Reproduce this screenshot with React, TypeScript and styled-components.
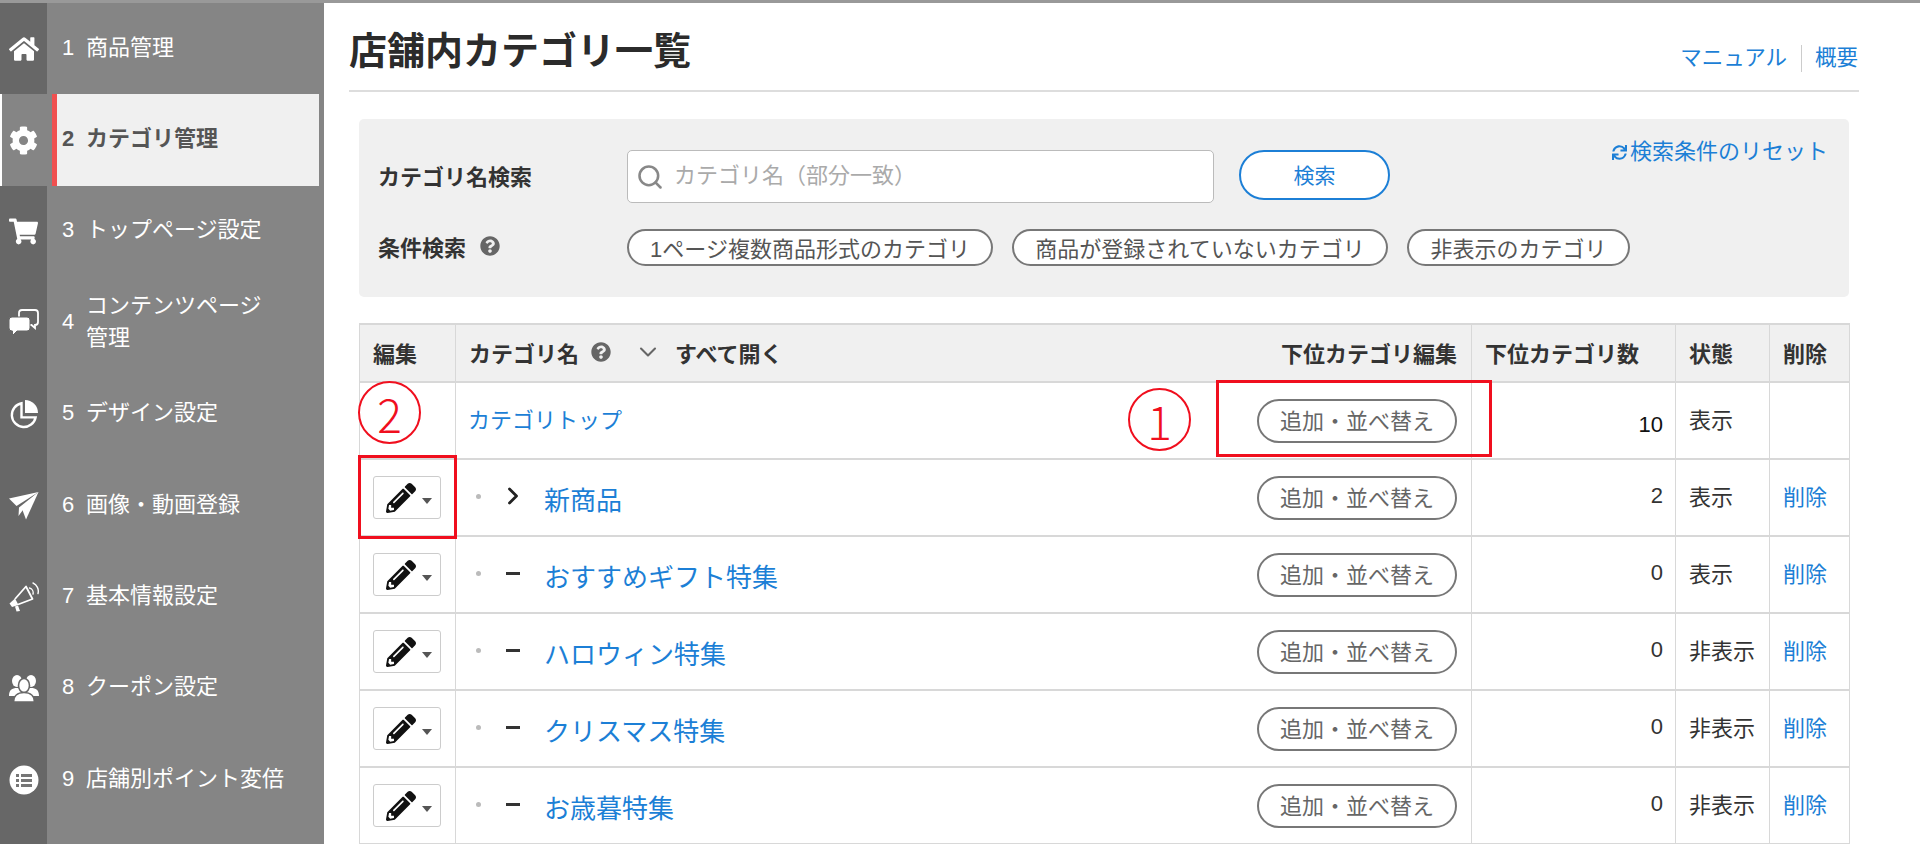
import React, { ReactNode } from 'react'
import styled, { createGlobalStyle } from 'styled-components'
import { FaCog, FaHome, FaPencilAlt, FaQuestionCircle, FaShoppingCart, FaSync } from 'react-icons/fa'
import { ChevronDown, ChevronRight, Search } from 'lucide-react'

const GlobalStyle = createGlobalStyle`
  html, body {
    margin: 0;
    height: 844px;
    overflow: hidden;
    background: #fff;
  }
  body {
    font-family: "Liberation Sans", "Noto Sans CJK JP", sans-serif;
    color: #333;
  }
  * { box-sizing: border-box; }
`

const Page = styled.div`
  height: 844px;
  border-top: 3px solid #999;
  display: flex;
  overflow: hidden;
`

const Sidebar = styled.nav`
  width: 324px;
  flex: none;
  background: linear-gradient(90deg, #676767 47px, #858585 47px);
`

const MenuItem = styled.div<{ $active?: boolean }>`
  height: 91.4px;
  display: flex;
  align-items: stretch;
  color: ${(p) => (p.$active ? '#555' : '#fff')};
  font-weight: ${(p) => (p.$active ? 700 : 400)};
  font-size: 22px;
`

const Rail = styled.div<{ $active?: boolean }>`
  width: 47px;
  flex: none;
  display: flex;
  align-items: center;
  justify-content: center;
  color: #fff;
  background: ${(p) => (p.$active ? '#858585' : 'transparent')};
  border-left: ${(p) => (p.$active ? '2px solid #fff' : 'none')};
  padding-right: ${(p) => (p.$active ? '3px' : '0')};
`

const MenuBody = styled.div<{ $active?: boolean }>`
  flex: 1;
  display: flex;
  align-items: center;
  margin: ${(p) => (p.$active ? '0 5px 0 5px' : '0')};
  padding: 0 0 2px ${(p) => (p.$active ? '5px' : '15px')};
  background: ${(p) => (p.$active ? '#f0f0f0' : 'transparent')};
  border-left: ${(p) => (p.$active ? '5px solid #f05050' : 'none')};
`

const MenuNumber = styled.span`
  width: 24px;
  flex: none;
`

const MenuLabel = styled.span`
  line-height: 32px;
  white-space: nowrap;
`

const Main = styled.main`
  flex: 1;
  padding: 0 61px 0 25px;
  min-width: 0;
`

const TitleBar = styled.header`
  height: 89px;
  display: flex;
  justify-content: space-between;
  align-items: flex-start;
  border-bottom: 2px solid #ddd;
`

const Title = styled.h1`
  margin: 23px 0 0;
  font-size: 38px;
  line-height: 50px;
  font-weight: 700;
  color: #2b2b2b;
`

const TitleLinks = styled.div`
  display: flex;
  align-items: center;
  margin-top: 35px;
  padding-right: 1px;
  font-size: 21.5px;
  line-height: 40px;
`

const BlueLink = styled.a`
  color: #1c7fd6;
  text-decoration: none;
`

const Separator = styled.span`
  width: 1px;
  height: 27px;
  background: #ccc;
  margin: 0 13px 0 14px;
`

const SearchPanel = styled.section`
  margin: 27px 10px 0 10px;
  height: 178px;
  padding: 31px 21px 0 19px;
  background: #f0f0f0;
  border-radius: 5px;
  display: flex;
  flex-direction: column;
  gap: 26px;
`

const SearchRow = styled.div`
  display: flex;
  align-items: center;
`

const FieldLabel = styled.div`
  width: 249px;
  flex: none;
  display: flex;
  align-items: center;
  gap: 14px;
  padding-bottom: 4px;
  font-size: 22px;
  font-weight: 700;
  color: #333;
`

const InputBox = styled.label`
  width: 587px;
  height: 53px;
  display: flex;
  align-items: center;
  gap: 10px;
  padding-left: 8px;
  background: #fff;
  border: 1px solid #bbb;
  border-radius: 5px;
  color: #888;
`

const SearchInput = styled.input`
  flex: 1;
  min-width: 0;
  border: none;
  outline: none;
  background: transparent;
  font: inherit;
  font-size: 22px;
  padding: 0 0 2px;
  &::placeholder { color: #aaa; }
`

const SearchButton = styled.button`
  width: 151px;
  height: 50px;
  margin-left: 25px;
  padding: 0 0 3px;
  align-self: flex-start;
  background: #fff;
  border: 2px solid #1c7fd6;
  border-radius: 25px;
  color: #1c7fd6;
  font: inherit;
  font-size: 21px;
`

const ResetLink = styled(BlueLink)`
  margin-left: auto;
  align-self: flex-start;
  margin-top: -14px;
  display: flex;
  align-items: center;
  gap: 3px;
  font-size: 22px;
  line-height: 32px;
`

const FilterPills = styled.div`
  display: flex;
  gap: 19px;
`

const Pill = styled.button<{ $w: number; $h: number }>`
  width: ${(p) => p.$w}px;
  height: ${(p) => p.$h}px;
  padding: 0 0 6px;
  flex: none;
  background: #fff;
  border: 2px solid #777;
  border-radius: 22px;
  color: #555;
  font: inherit;
  font-size: 22px;
  white-space: nowrap;
`

const TableWrap = styled.div`
  position: relative;
  margin: 26px 10px 0 10px;
`

const Table = styled.table`
  width: 1490px;
  table-layout: fixed;
  border-collapse: collapse;
  font-size: 22px;
`

const Th = styled.th<{ $align?: string }>`
  height: 58px;
  padding: 0 12px 2px 13px;
  background: #f0f0f0;
  border: 1px solid #d8d8d8;
  border-top-width: 2px;
  border-bottom-width: 2px;
  text-align: ${(p) => p.$align || 'left'};
  font-weight: 700;
  color: #333;
  white-space: nowrap;
`

const Td = styled.td<{ $align?: string }>`
  height: 77px;
  padding: 0 12px 0 13px;
  border: 1px solid #d8d8d8;
  border-top-width: 2px;
  border-bottom-width: 2px;
  text-align: ${(p) => p.$align || 'left'};
  color: #333;
`

const HeaderSplit = styled.div`
  display: flex;
  align-items: center;
  justify-content: space-between;
  padding-right: 2px;
`

const HeaderLeft = styled.div`
  display: flex;
  align-items: center;
  gap: 12px;
`

const ExpandAll = styled.span`
  display: inline-flex;
  align-items: center;
  gap: 13px;
  margin-left: 11px;
  font-size: 22px;
`

const NameCell = styled.div`
  display: flex;
  align-items: center;
  padding-right: 2px;
`

const TreeDot = styled.span`
  width: 5px;
  height: 5px;
  margin: -2px 0 0 7px;
  border-radius: 50%;
  background: #bbb;
  flex: none;
`

const TreeToggle = styled.span`
  width: 38px;
  margin-left: 25px;
  height: 20px;
  margin-top: -3px;
  display: flex;
  align-items: center;
  flex: none;
  color: #222;
`

const TreeDash = styled.span`
  width: 14px;
  height: 3px;
  background: #333;
`

const CategoryLink = styled(BlueLink)<{ $top?: boolean }>`
  font-size: ${(p) => (p.$top ? '22px' : '26px')};
  margin-top: ${(p) => (p.$top ? '-5px' : '1px')};
  margin-left: ${(p) => (p.$top ? '-1px' : '0')};
  white-space: nowrap;
`

const SortButton = styled.button`
  margin-left: auto;
  width: 200px;
  height: 44px;
  padding: 0 0 3px;
  background: #fff;
  border: 2px solid #777;
  border-radius: 22px;
  color: #666;
  font: inherit;
  font-size: 22px;
`

const EditButton = styled.button`
  width: 68px;
  height: 43px;
  padding: 0 8px 0 12px;
  display: flex;
  align-items: center;
  justify-content: space-between;
  background: #fff;
  border: 1px solid #ccc;
  border-radius: 3px;
  color: #111;
`

const Caret = styled.span`
  width: 0;
  height: 0;
  margin-top: 6px;
  border-left: 5px solid transparent;
  border-right: 5px solid transparent;
  border-top: 6px solid #555;
`

const CountText = styled.span<{ $low?: boolean }>`
  position: relative;
  top: ${(p) => (p.$low ? '4px' : '-2px')};
  color: ${(p) => (p.$low ? '#111' : '#333')};
`

const StatusText = styled.span`
  position: relative;
  top: -3px;
`

const NoteBox = styled.div<{ $x: number; $y: number; $w: number; $h: number }>`
  position: absolute;
  left: ${(p) => p.$x}px;
  top: ${(p) => p.$y}px;
  width: ${(p) => p.$w}px;
  height: ${(p) => p.$h}px;
  border: 3px solid #f00f1e;
  pointer-events: none;
`

const NoteCircle = styled.div<{ $x: number; $y: number }>`
  position: absolute;
  left: ${(p) => p.$x}px;
  top: ${(p) => p.$y}px;
  width: 63px;
  height: 63px;
  border: 2px solid #f00f1e;
  border-radius: 50%;
  display: flex;
  align-items: center;
  justify-content: center;
  background: #fff;
  color: #f00f1e;
  font-family: "Noto Sans CJK JP", sans-serif;
  font-size: 46px;
  line-height: 1;
  font-weight: 300;
`

const CommentsIcon = () => (
  <svg width="30" height="27" viewBox="0 0 30 27">
    <path d="M13 1h13a3 3 0 0 1 3 3v9a3 3 0 0 1-3 3v3l-3.5-3H13a3 3 0 0 1-3-3V4a3 3 0 0 1 3-3z" fill="none" stroke="#fff" strokeWidth="1.8" />
    <path d="M3 8h15a3 3 0 0 1 3 3v8a3 3 0 0 1-3 3H8l-4.5 4.5V22H3a3 3 0 0 1-3-3v-8a3 3 0 0 1 3-3z" fill="#fff" stroke="#676767" strokeWidth="1" />
  </svg>
)

const PieIcon = () => (
  <svg width="30" height="30" viewBox="0 0 30 30">
    <path d="M12.5 4.2A12 12 0 1 0 26.6 18.4H12.5z" fill="none" stroke="#fff" strokeWidth="2.4" />
    <path d="M16 1a13 13 0 0 1 13 13H16z" fill="#fff" />
  </svg>
)

const PlaneIcon = () => (
  <svg width="30" height="28" viewBox="0 0 30 28">
    <path d="M0 6.5 L29.5 0 L7.5 14z" fill="#fff" />
    <path d="M29.5 0 L10 15.5 L9.5 24 L13.5 18.5z" fill="#fff" />
    <path d="M29.5 0 L12.5 15.5 L17 27.5z" fill="#fff" />
  </svg>
)

const MegaphoneIcon = () => (
  <svg width="30" height="30" viewBox="0 0 30 30">
    <path d="M6 17 L17 4.5 L23.5 17 L9 22.5" fill="none" stroke="#fff" strokeWidth="1.8" strokeLinejoin="round" />
    <path d="M6 16.5 L0.5 21.5 L3 25 L9.5 23z" fill="#fff" />
    <path d="M6 24.5 L9 23.5 L11 29 L7.5 29.5z" fill="#fff" />
    <path d="M20.5 6a5 5 0 0 1 3.5 6M24 1a9 9 0 0 1 5 10.5" fill="none" stroke="#fff" strokeWidth="1.4" strokeLinecap="round" />
  </svg>
)

const UsersIcon = () => (
  <svg width="30" height="27" viewBox="0 0 30 27">
    <ellipse cx="8" cy="6" rx="5" ry="6" fill="#fff" />
    <ellipse cx="22" cy="6" rx="5" ry="6" fill="#fff" />
    <path d="M0 21c0-6 3-8 8-8s8 2 8 8zM14 21c0-6 3-8 8-8s8 2 8 8z" fill="#fff" />
    <ellipse cx="15" cy="10.5" rx="5.5" ry="7" fill="#fff" stroke="#676767" strokeWidth="1.6" />
    <path d="M4.5 27c0-6 4-9.5 10.5-9.5S25.5 21 25.5 27z" fill="#fff" stroke="#676767" strokeWidth="1.6" />
  </svg>
)

const ListIcon = () => (
  <svg width="30" height="30" viewBox="0 0 30 30">
    <circle cx="15" cy="15" r="14.5" fill="#fff" />
    <path d="M7 9h3v3H7zM12 9h11v3H12zM7 14h3v3H7zM12 14h11v3H12zM7 19h3v3H7zM12 19h11v3H12z" fill="#767676" />
  </svg>
)

type MenuEntry = { no: number; label: ReactNode; icon: ReactNode; active?: boolean }

const menu: MenuEntry[] = [
  { no: 1, label: '商品管理', icon: <FaHome size={30} /> },
  { no: 2, label: 'カテゴリ管理', icon: <FaCog size={29} />, active: true },
  { no: 3, label: 'トップページ設定', icon: <FaShoppingCart size={29} /> },
  { no: 4, label: <>コンテンツページ<br />管理</>, icon: <CommentsIcon /> },
  { no: 5, label: 'デザイン設定', icon: <PieIcon /> },
  { no: 6, label: '画像・動画登録', icon: <PlaneIcon /> },
  { no: 7, label: '基本情報設定', icon: <MegaphoneIcon /> },
  { no: 8, label: 'クーポン設定', icon: <UsersIcon /> },
  { no: 9, label: '店舗別ポイント変倍', icon: <ListIcon /> },
]

const rows = [
  { name: '新商品', count: 2, status: '表示', open: true },
  { name: 'おすすめギフト特集', count: 0, status: '表示' },
  { name: 'ハロウィン特集', count: 0, status: '非表示' },
  { name: 'クリスマス特集', count: 0, status: '非表示' },
  { name: 'お歳暮特集', count: 0, status: '非表示' },
]

const HelpIcon = () => <FaQuestionCircle size={20} color="#666" />

const App = () => {
  return (
    <Page>
      <GlobalStyle />
      <Sidebar>
        {menu.map((item) => (
          <MenuItem key={item.no} $active={item.active}>
            <Rail $active={item.active}>{item.icon}</Rail>
            <MenuBody $active={item.active}>
              <MenuNumber>{item.no}</MenuNumber>
              <MenuLabel>{item.label}</MenuLabel>
            </MenuBody>
          </MenuItem>
        ))}
      </Sidebar>
      <Main>
        <TitleBar>
          <Title>店舗内カテゴリ一覧</Title>
          <TitleLinks>
            <BlueLink href="#">マニュアル</BlueLink>
            <Separator />
            <BlueLink href="#">概要</BlueLink>
          </TitleLinks>
        </TitleBar>

        <SearchPanel>
          <SearchRow>
            <FieldLabel>カテゴリ名検索</FieldLabel>
            <InputBox>
              <Search size={28} strokeWidth={2.2} />
              <SearchInput placeholder="カテゴリ名（部分一致）" />
            </InputBox>
            <SearchButton>検索</SearchButton>
            <ResetLink href="#">
              <FaSync size={15} />
              検索条件のリセット
            </ResetLink>
          </SearchRow>
          <SearchRow>
            <FieldLabel>
              条件検索
              <HelpIcon />
            </FieldLabel>
            <FilterPills>
              <Pill $w={366} $h={37}>1ページ複数商品形式のカテゴリ</Pill>
              <Pill $w={376} $h={37}>商品が登録されていないカテゴリ</Pill>
              <Pill $w={223} $h={37}>非表示のカテゴリ</Pill>
            </FilterPills>
          </SearchRow>
        </SearchPanel>

        <TableWrap>
          <Table>
            <colgroup>
              <col width={96} />
              <col width={1016} />
              <col width={204} />
              <col width={94} />
              <col width={80} />
            </colgroup>
            <thead>
              <tr>
                <Th>編集</Th>
                <Th>
                  <HeaderSplit>
                    <HeaderLeft>
                      カテゴリ名
                      <HelpIcon />
                      <ExpandAll>
                        <ChevronDown size={28} color="#666" strokeWidth={1.8} />
                        すべて開く
                      </ExpandAll>
                    </HeaderLeft>
                    下位カテゴリ編集
                  </HeaderSplit>
                </Th>
                <Th>下位カテゴリ数</Th>
                <Th>状態</Th>
                <Th>削除</Th>
              </tr>
            </thead>
            <tbody>
              <tr>
                <Td />
                <Td>
                  <NameCell>
                    <CategoryLink href="#" $top>カテゴリトップ</CategoryLink>
                    <SortButton>追加・並べ替え</SortButton>
                  </NameCell>
                </Td>
                <Td $align="right"><CountText $low>10</CountText></Td>
                <Td><StatusText>表示</StatusText></Td>
                <Td />
              </tr>
              {rows.map((row) => (
                <tr key={row.name}>
                  <Td>
                    <EditButton>
                      <FaPencilAlt size={30} />
                      <Caret />
                    </EditButton>
                  </Td>
                  <Td>
                    <NameCell>
                      <TreeDot />
                      <TreeToggle>
                        {row.open ? <ChevronRight size={28} strokeWidth={2.4} style={{ marginLeft: -7 }} /> : <TreeDash />}
                      </TreeToggle>
                      <CategoryLink href="#">{row.name}</CategoryLink>
                      <SortButton>追加・並べ替え</SortButton>
                    </NameCell>
                  </Td>
                  <Td $align="right"><CountText>{row.count}</CountText></Td>
                  <Td><StatusText>{row.status}</StatusText></Td>
                  <Td><StatusText><BlueLink href="#">削除</BlueLink></StatusText></Td>
                </tr>
              ))}
            </tbody>
          </Table>
          <NoteBox $x={857} $y={57} $w={276} $h={77} />
          <NoteBox $x={-1} $y={132} $w={99} $h={84} />
          <NoteCircle $x={769} $y={65}>1</NoteCircle>
          <NoteCircle $x={-1} $y={58}>2</NoteCircle>
        </TableWrap>
      </Main>
    </Page>
  )
}

export default App
